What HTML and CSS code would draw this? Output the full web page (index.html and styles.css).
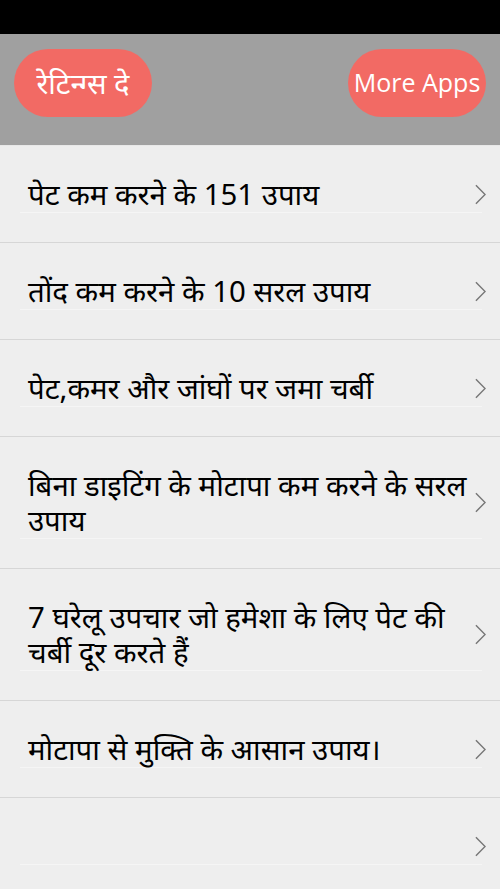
FILE: index.html
```html
<!DOCTYPE html>
<html lang="hi">
<head>
  <meta charset="UTF-8">
  <meta name="viewport" content="width=device-width, initial-scale=1.0">
  <title>पेट कम करने के उपाय</title>
  <link rel="stylesheet" href="styles.css">
</head>
<body>

<div class="status-bar"></div>

<!-- Top bar with the two buttons -->
<div class="top-bar">
  <button class="pill hi">रेटिन्ग्स दे</button>
  <button class="pill">More Apps</button>
</div>

<!-- List of articles -->
<ul class="list">
  <li class="row"><span class="title">पेट कम करने के 151 उपाय</span><svg class="chev" viewBox="0 0 12 22"><polyline points="1,1 11,11 1,21"/></svg></li>
  <li class="row"><span class="title">तोंद कम करने के 10 सरल उपाय</span><svg class="chev" viewBox="0 0 12 22"><polyline points="1,1 11,11 1,21"/></svg></li>
  <li class="row"><span class="title">पेट,कमर और जांघों पर जमा चर्बी</span><svg class="chev" viewBox="0 0 12 22"><polyline points="1,1 11,11 1,21"/></svg></li>
  <li class="row"><span class="title">बिना डाइटिंग के मोटापा कम करने के सरल उपाय</span><svg class="chev" viewBox="0 0 12 22"><polyline points="1,1 11,11 1,21"/></svg></li>
  <li class="row"><span class="title">7 घरेलू उपचार जो हमेशा के लिए पेट की चर्बी दूर करते हैं</span><svg class="chev" viewBox="0 0 12 22"><polyline points="1,1 11,11 1,21"/></svg></li>
  <li class="row"><span class="title">मोटापा से मुक्ति के आसान उपाय।</span><svg class="chev" viewBox="0 0 12 22"><polyline points="1,1 11,11 1,21"/></svg></li>
  <li class="row"><span class="title"></span><svg class="chev" viewBox="0 0 12 22"><polyline points="1,1 11,11 1,21"/></svg></li>
</ul>

</body>
</html>
```

FILE: styles.css
```css
body {
  margin: 0;
  background-color: #eeeeee;
  font-family: "Noto Sans", "Noto Sans Devanagari", "Lohit Devanagari", sans-serif;
}

.status-bar {
  height: 34px;
  background-color: #000;
}

/* Gray bar holding the buttons */
.top-bar {
  display: flex;
  justify-content: space-between;
  align-items: flex-start;
  height: 111px;
  box-sizing: border-box;
  padding: 15px 14px 0;
  background-color: #a0a0a0;
}

.pill {
  width: 138px;
  height: 68px;
  border: none;
  border-radius: 34px;
  background-color: #f26a64;
  color: #fff;
  font-family: "Open Sans", "Noto Sans", sans-serif;
  font-size: 25px;
  padding: 0 0 2px;
}

.pill.hi {
  font-size: 29px;
}

.list {
  list-style: none;
  margin: 0;
  padding: 0;
}

.row {
  display: flex;
  align-items: center;
  padding: 0 14px 0 20px;
  border-top: 1px solid #d6d6d6;
}

.row:first-child {
  border-top-color: #e8e8e8;
}

.title {
  flex: 1;
  min-height: 35px;
  margin: 31px 0 29px;
  padding: 0 10px 0 8px;
  border-bottom: 1px solid #f5f5f5;
  color: #000;
  font-size: 29.4px;
  line-height: 35px;
}

/* Thin right chevron */
.chev {
  width: 11px;
  height: 21px;
  margin-left: -7px;
  fill: none;
  stroke: #777;
  stroke-width: 1.6;
}
```
